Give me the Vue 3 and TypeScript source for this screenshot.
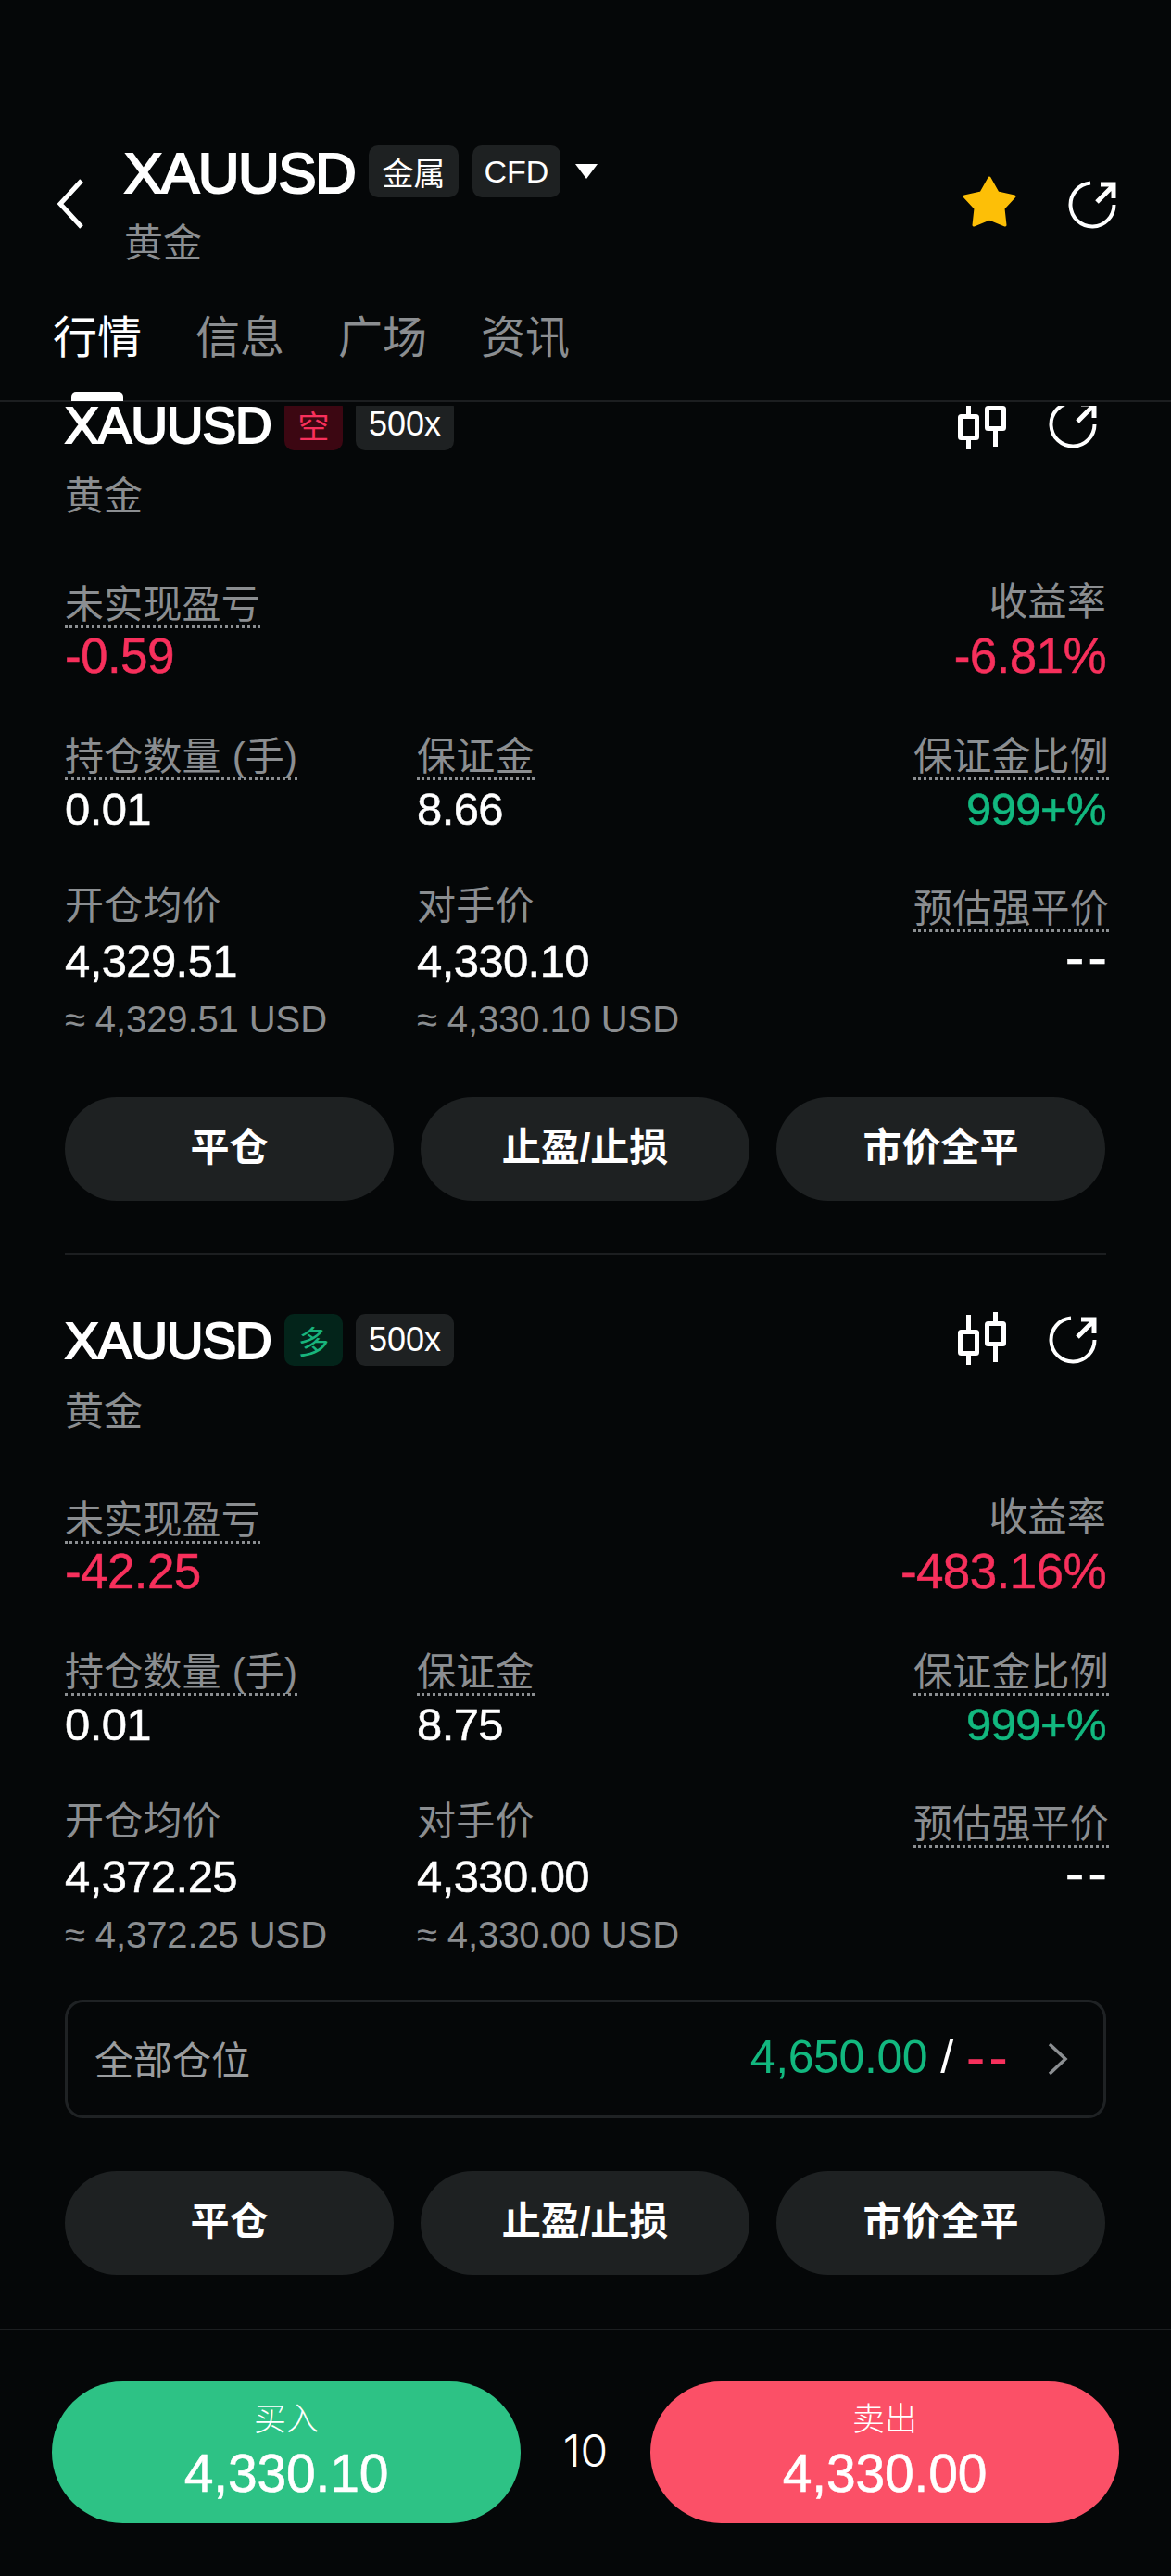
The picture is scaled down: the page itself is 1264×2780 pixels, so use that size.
<script setup lang="ts">
type Pos = {
  side: string
  long: boolean
  pnl: string
  rate: string
  margin: string
  open: string
  mark: string
  showAll: boolean
}

const positions: Pos[] = [
  { side: '空', long: false, pnl: '-0.59', rate: '-6.81%', margin: '8.66', open: '4,329.51', mark: '4,330.10', showAll: false },
  { side: '多', long: true, pnl: '-42.25', rate: '-483.16%', margin: '8.75', open: '4,372.25', mark: '4,330.00', showAll: true },
]
const tabs = ['行情', '信息', '广场', '资讯']
const actions = ['平仓', '止盈/止损', '市价全平']
</script>

<template>
  <div class="page">
    <header class="head">
      <div class="top">
        <svg class="back" width="30" height="54" viewBox="0 0 30 54">
          <path d="M27 2 L4 27 L27 52" fill="none" stroke="#fff" stroke-width="5" />
        </svg>
        <div class="head-info">
          <div class="head-line">
            <span class="head-name">XAUUSD</span>
            <span class="tag head-tag">金属</span>
            <span class="tag head-tag">CFD</span>
            <span class="tri"></span>
          </div>
          <div class="head-sub">黄金</div>
        </div>
        <svg class="star" width="60" height="56" viewBox="0 0 60 56">
          <path d="M30 2 L39 18 L57 22 L45 35 L47 53 L30 46 L13 53 L15 35 L3 22 L21 18 Z" fill="#fdbf07" stroke="#fdbf07" stroke-width="3" stroke-linejoin="round" />
        </svg>
        <svg class="head-share" width="54" height="54" viewBox="0 0 54 54">
          <path d="M24 3.6 A23.5 23.5 0 1 0 49.5 27" fill="none" stroke="#fff" stroke-width="4" />
          <path d="M31 24 L49 6 M35 5 H49 V20" fill="none" stroke="#fff" stroke-width="5" />
        </svg>
      </div>
      <nav class="tabs">
        <span v-for="(t, i) in tabs" :key="t" class="tab" :class="{ active: i === 0 }">{{ t }}</span>
      </nav>
    </header>

    <main class="scroll">
      <div class="cards">
        <section v-for="(p, i) in positions" :key="i" class="card" :class="{ second: i > 0 }">
          <div class="name-row">
            <span class="name">XAUUSD</span>
            <span class="tag side" :class="p.long ? 'long' : 'short'">{{ p.side }}</span>
            <span class="tag lev">500x</span>
            <span class="spacer"></span>
            <svg class="candle" width="60" height="60" viewBox="0 0 60 60">
              <g fill="none" stroke="#fff" stroke-width="5">
                <rect x="4.5" y="21.5" width="18" height="23" rx="1" />
                <rect x="33.5" y="12.5" width="18" height="22" rx="1" />
                <path d="M13.5 3 V19 M13.5 47 V57 M42.5 0 V10 M42.5 37 V54" />
              </g>
            </svg>
            <svg class="share" width="54" height="54" viewBox="0 0 54 54">
              <path d="M24 3.6 A23.5 23.5 0 1 0 49.5 27" fill="none" stroke="#fff" stroke-width="4" />
              <path d="M31 24 L49 6 M35 5 H49 V20" fill="none" stroke="#fff" stroke-width="5" />
            </svg>
          </div>
          <div class="sub">黄金</div>

          <div class="grid">
            <div class="cell wide">
              <div class="lbl"><span class="dot">未实现盈亏</span></div>
              <div class="val big red">{{ p.pnl }}</div>
            </div>
            <div class="cell right">
              <div class="lbl">收益率</div>
              <div class="val big red">{{ p.rate }}</div>
            </div>

            <div class="cell">
              <div class="lbl"><span class="dot">持仓数量 (手)</span></div>
              <div class="val">0.01</div>
            </div>
            <div class="cell">
              <div class="lbl"><span class="dot">保证金</span></div>
              <div class="val">{{ p.margin }}</div>
            </div>
            <div class="cell right">
              <div class="lbl"><span class="dot">保证金比例</span></div>
              <div class="val green">999+%</div>
            </div>

            <div class="cell">
              <div class="lbl">开仓均价</div>
              <div class="val">{{ p.open }}</div>
              <div class="usd">≈ {{ p.open }} USD</div>
            </div>
            <div class="cell">
              <div class="lbl">对手价</div>
              <div class="val">{{ p.mark }}</div>
              <div class="usd">≈ {{ p.mark }} USD</div>
            </div>
            <div class="cell right">
              <div class="lbl"><span class="dot">预估强平价</span></div>
              <div class="val dashes">--</div>
            </div>
          </div>

          <div v-if="p.showAll" class="all">
            <span class="all-label">全部仓位</span>
            <span class="all-val">
              <span class="green">4,650.00</span>
              <span class="slash">/</span>
              <span class="red all-dash">--</span>
            </span>
            <svg class="chev" width="22" height="34" viewBox="0 0 22 34">
              <path d="M2 1 L19 17 L2 33" fill="none" stroke="#8b8e91" stroke-width="3.5" />
            </svg>
          </div>

          <div class="actions">
            <button v-for="a in actions" :key="a" class="act">{{ a }}</button>
          </div>
        </section>
      </div>
    </main>

    <footer class="foot">
      <div class="trade buy">
        <span class="trade-label">买入</span>
        <span class="trade-price">4,330.10</span>
      </div>
      <span class="qty">10</span>
      <div class="trade sell">
        <span class="trade-label">卖出</span>
        <span class="trade-price">4,330.00</span>
      </div>
    </footer>
  </div>
</template>

<style>
html,
body {
  margin: 0;
  background: #050708;
}
</style>

<style scoped>
.page {
  width: 1264px;
  height: 2780px;
  display: flex;
  flex-direction: column;
  overflow: hidden;
  background: #050708;
  color: #fff;
  font-family: 'Liberation Sans', 'Noto Sans CJK SC', sans-serif;
}

.head {
  height: 438px;
  flex: none;
  box-sizing: border-box;
  padding-top: 157px;
  display: flex;
  flex-direction: column;
}

.top {
  display: flex;
  align-items: flex-start;
  padding-left: 61px;
  height: 134px;
  flex: none;
}

.back {
  margin-top: 36px;
  margin-right: 43px;
}

.head-info {
  flex: 1;
}

.head-line {
  display: flex;
  align-items: center;
  height: 56px;
}

.head-name {
  width: 264px;
  flex: none;
  padding-top: 3px;
  font-size: 62px;
  letter-spacing: -1.5px;
  line-height: 56px;
  -webkit-text-stroke: 2.2px #fff;
}

.tag {
  display: inline-flex;
  align-items: center;
  justify-content: center;
  height: 56px;
  box-sizing: border-box;
  border-radius: 10px;
  background: #1e2122;
  font-size: 34px;
  flex: none;
}

.head-tag {
  width: 97px;
  margin-right: 15px;
}

.head-tag + .head-tag {
  width: 95px;
}

.tri {
  width: 0;
  height: 0;
  margin-left: 1px;
  border-left: 12px solid transparent;
  border-right: 12px solid transparent;
  border-top: 16px solid #fff;
}

.head-sub {
  margin-top: 22px;
  font-size: 42px;
  line-height: 56px;
  color: #8b8e91;
}

.star {
  margin-top: 33px;
  margin-right: 55px;
}

.head-share {
  margin-top: 37px;
  margin-right: 57px;
}

.tabs {
  height: 143px;
  flex: none;
  box-sizing: border-box;
  display: flex;
  gap: 58px;
  padding-left: 57px;
  padding-top: 44px;
  border-bottom: 2px solid #1c1e20;
}

.tab {
  position: relative;
  font-size: 48px;
  line-height: 60px;
  color: #8b8e91;
  height: 60px;
}

.tab.active {
  color: #fff;
}

.tab.active::after {
  content: '';
  position: absolute;
  left: 20px;
  width: 56px;
  top: 88px;
  height: 10px;
  border-radius: 5px 5px 0 0;
  background: #fff;
}

.scroll {
  height: 2075px;
  flex: none;
  overflow: hidden;
}

.cards {
  margin-top: -8px;
}

.card {
  padding: 0 70px 56px;
}

.card.second {
  margin: 0 70px;
  padding: 64px 0 57px;
  border-top: 2px solid #1c1e20;
}

.name-row {
  display: flex;
  align-items: center;
  height: 56px;
}

.name {
  width: 237px;
  flex: none;
  padding-top: 2px;
  font-size: 55px;
  letter-spacing: -1.1px;
  line-height: 56px;
  -webkit-text-stroke: 2px #fff;
}

.side {
  width: 63px;
  margin-right: 14px;
}

.long {
  background: #03241a;
  color: #18b47c;
}

.short {
  background: #3c0712;
  color: #f7305c;
}

.lev {
  width: 106px;
  font-size: 36px;
}

.spacer {
  flex: 1;
}

.candle {
  margin-right: 40px;
}

.share {
  margin-right: 8px;
}

.sub {
  margin-top: 25px;
  font-size: 42px;
  line-height: 50px;
  color: #8b8e91;
}

.grid {
  margin-top: 64px;
  display: grid;
  grid-template-columns: 380px 1fr auto;
  row-gap: 46px;
}

.wide {
  grid-column: 1 / 3;
}

.cell {
  min-width: 0;
}

.right {
  text-align: right;
}

.right .dot {
  margin-right: -3px;
}

.lbl {
  height: 52px;
  font-size: 42px;
  line-height: 50px;
  letter-spacing: 0.2px;
  color: #8b8e91;
}

.dot {
  display: inline-block;
  margin-top: 3px;
  line-height: 50px;
  height: 47px;
  border-bottom: 3px dotted #8b8e91;
}

.val {
  font-size: 49px;
  line-height: 64px;
  margin-bottom: 2px;
  letter-spacing: -0.6px;
  -webkit-text-stroke: 0.5px currentColor;
}

.big {
  font-size: 53px;
  line-height: 62px;
  margin-bottom: 4px;
}

.usd {
  margin-top: 7px;
  font-size: 40px;
  line-height: 48px;
  letter-spacing: -0.1px;
  color: #8b8e91;
}

.dashes {
  font-size: 62px;
  line-height: 56px;
  letter-spacing: 4px;
  margin-right: -5px;
}

.red {
  color: #f7305c;
}

.green {
  color: #12b87f;
}

.all {
  margin-top: 46px;
  height: 128px;
  box-sizing: border-box;
  border: 3px solid #1f2224;
  border-radius: 20px;
  display: flex;
  align-items: center;
  padding: 0 38px 4px 29px;
}

.all-label {
  flex: 1;
  font-size: 42px;
  color: #9a9c9e;
}

.all-val {
  display: flex;
  align-items: center;
  font-size: 50px;
  letter-spacing: -0.4px;
  margin-right: 39px;
}

.slash {
  margin: 0 14px;
  color: #fff;
}

.all-dash {
  font-size: 62px;
  line-height: 50px;
  letter-spacing: 4px;
}

.chev {
  margin-top: 4px;
}

.actions {
  margin-top: 57px;
  display: grid;
  grid-template-columns: repeat(3, 355px);
  gap: 29px;
}

.card:first-child .actions {
  margin-top: 60px;
}

.act {
  height: 112px;
  border: none;
  border-radius: 56px;
  background: #1e2122;
  color: #fff;
  font-family: inherit;
  font-size: 42px;
  font-weight: 700;
  padding: 0 0 11px;
}

.foot {
  flex: 1;
  box-sizing: border-box;
  border-top: 2px solid #1c1e20;
  padding: 55px 56px 0;
  display: flex;
  align-items: flex-start;
}

.trade {
  width: 506px;
  height: 153px;
  border-radius: 77px;
  display: flex;
  flex-direction: column;
  align-items: center;
  flex: none;
}

.buy {
  background: #2dc285;
}

.sell {
  background: #fb5067;
}

.trade-label {
  margin-top: 18px;
  font-size: 35px;
  line-height: 46px;
  font-weight: 300;
}

.trade-price {
  margin-top: 2px;
  font-size: 57px;
  line-height: 66px;
  letter-spacing: -0.2px;
  -webkit-text-stroke: 0.6px currentColor;
}

.qty {
  flex: 1;
  text-align: center;
  margin-top: 48px;
  font-family: Inter, 'Liberation Sans', sans-serif;
  font-weight: 300;
  font-size: 48px;
  line-height: 54px;
}
</style>
